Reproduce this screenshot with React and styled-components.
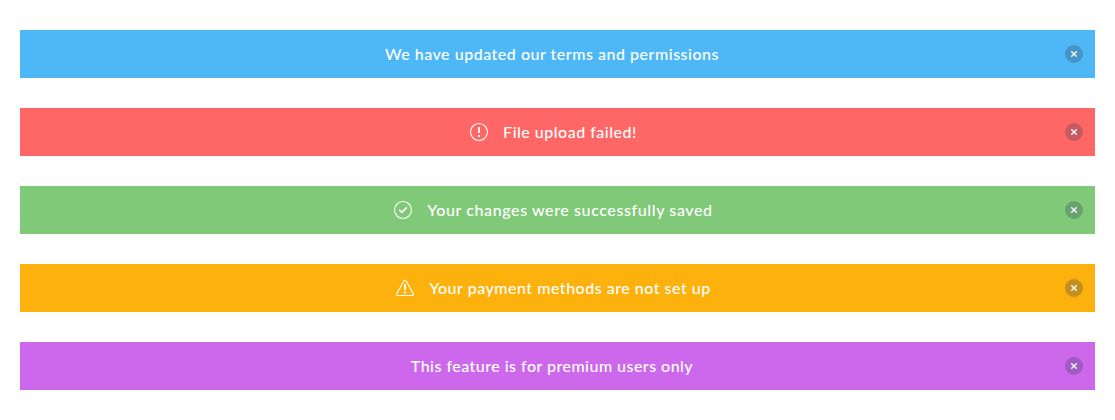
import React from 'react';
import styled, { createGlobalStyle } from 'styled-components';

const GlobalStyle = createGlobalStyle`
  body { margin: 0; background: #fff; }
  * { box-sizing: border-box; }
`;

const Page = styled.main`
  display: flex;
  flex-direction: column;
  gap: 30px;
  padding: 30px 20px;
`;

const tones = {
  info: '#4eb7f5',
  error: '#ff6666',
  success: '#80c979',
  warning: '#fdb10c',
  premium: '#cd68ec',
};

const Bar = styled.div`
  display: flex;
  align-items: center;
  gap: 5px;
  height: 48px;
  padding: 0 12px 0 24px;
  background: ${({ $tone }) => tones[$tone]};
  color: #fff;
`;

const Content = styled.div`
  flex: 1;
  display: flex;
  align-items: center;
  justify-content: center;
  gap: 12px;
`;

const Message = styled.span`
  font: 500 16px/24px Lato, 'Noto Sans', sans-serif;
  letter-spacing: ${({ $tracking }) => $tracking}px;
  white-space: nowrap;
`;

const StatusIcon = styled.svg`
  display: block;
  flex: none;
  width: 24px;
  height: 24px;
  fill: none;
  stroke: currentColor;
`;

const CloseButton = styled.button`
  display: grid;
  place-items: center;
  flex: none;
  width: 18px;
  height: 18px;
  padding: 0;
  border: 0;
  border-radius: 50%;
  background: rgba(50, 65, 90, 0.29);
  color: #fff;
`;

const Cross = styled.svg`
  display: block;
  width: 6px;
  height: 6px;
  stroke: currentColor;
  stroke-width: 1.3;
`;

const icons = {
  error: (
    <StatusIcon viewBox="0 0 24 24">
      <circle cx="12" cy="12" r="8.5" strokeWidth="1.1" />
      <path d="M12 7v6M12 15v2" strokeWidth="1.8" />
    </StatusIcon>
  ),
  success: (
    <StatusIcon viewBox="0 0 24 24">
      <circle cx="12" cy="12" r="8.5" strokeWidth="1.1" />
      <path d="M8.3 11.7l2.6 2.6 4.9-4.9" strokeWidth="1.6" />
    </StatusIcon>
  ),
  warning: (
    <StatusIcon viewBox="0 0 24 24">
      <path d="M10.7 5.2q1.3-1.7 2.6 0l6.9 12.3q.9 2-.9 2H4.7q-1.8 0-.9-2z" strokeWidth="1.1" />
      <path d="M12 8v6M12 15.5v2" strokeWidth="1.8" />
    </StatusIcon>
  ),
};

const notices = [
  { tone: 'info', text: 'We have updated our terms and permissions', tracking: 0.52 },
  { tone: 'error', text: 'File upload failed!', tracking: 0.5 },
  { tone: 'success', text: 'Your changes were successfully saved', tracking: 0.6 },
  { tone: 'warning', text: 'Your payment methods are not set up', tracking: 0.51 },
  { tone: 'premium', text: 'This feature is for premium users only', tracking: 0.47 },
];

function Notification({ tone, text, tracking }) {
  return (
    <Bar $tone={tone} role="status">
      <Content>
        {icons[tone]}
        <Message $tracking={tracking}>{text}</Message>
      </Content>
      <CloseButton aria-label="Close">
        <Cross viewBox="0 0 6 6"><path d="M.3.3l5.4 5.4M5.7.3L.3 5.7" /></Cross>
      </CloseButton>
    </Bar>
  );
}

export default function App() {
  return (
    <>
      <GlobalStyle />
      <Page>
        {notices.map((notice) => <Notification key={notice.tone} {...notice} />)}
      </Page>
    </>
  );
}
